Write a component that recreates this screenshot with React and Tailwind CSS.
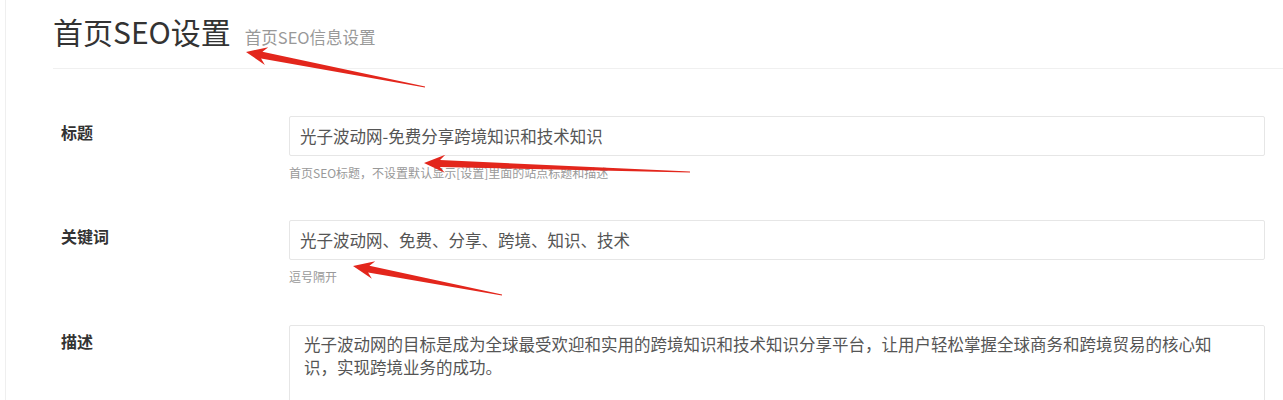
import React from "react";

const FONT = { fontFamily: '"Noto Sans CJK SC", "Noto Sans", sans-serif' };

// 截图里的红色标注箭头
function arrowPoints(tip, tail) {
  const dx = tip[0] - tail[0];
  const dy = tip[1] - tail[1];
  const len = Math.hypot(dx, dy);
  const ux = dx / len;
  const uy = dy / len;
  const nx = -uy;
  const ny = ux;
  const L = 16;
  const W = 9;
  const w1 = 3.4;
  const w0 = 0.5;
  const bx = tip[0] - ux * L;
  const by = tip[1] - uy * L;
  const barb = 5;
  const pts = [
    [tail[0] + nx * w0, tail[1] + ny * w0],
    [bx + nx * w1, by + ny * w1],
    [bx - ux * barb + nx * W, by - uy * barb + ny * W],
    [tip[0], tip[1]],
    [bx - ux * barb - nx * W, by - uy * barb - ny * W],
    [bx - nx * w1, by - ny * w1],
    [tail[0] - nx * w0, tail[1] - ny * w0],
  ];
  return pts.map((p) => p.map((v) => v.toFixed(1)).join(",")).join(" ");
}

const arrows = [
  { tip: [246, 52], tail: [425, 87] },
  { tip: [424, 163], tail: [690, 172] },
  { tip: [353, 266], tail: [502, 295] },
];

function Row({ label, children, help }) {
  return (
    <div className="flex">
      <div className="w-[236px] shrink-0 pl-2 pt-[4px]">
        <span className="block text-[16px] leading-[24px] font-bold text-[#333]">{label}</span>
      </div>
      <div className="flex-1">
        {children}
        {help && <p className="mt-2 text-[12px] leading-[18px] text-[#999]">{help}</p>}
      </div>
    </div>
  );
}

export default function App() {
  return (
    <div className="relative h-[400px] bg-white overflow-hidden" style={FONT}>
      <div className="ml-[5px] border-l border-[#efefef] h-full pl-[47px]">
        {/* 标题 */}
        <div className="flex items-baseline gap-[14px] pt-[13px] pb-[18px] border-b border-[#f0f0f0]">
          <h1 className="text-[30px] leading-[36px] text-[#333] font-normal">首页SEO设置</h1>
          <span className="text-[16.5px] text-[#999]">首页SEO信息设置</span>
        </div>

        <div className="pt-[47px] pr-[18px]">
          <Row label="标题" help="首页SEO标题，不设置默认显示[设置]里面的站点标题和描述">
            <input
              type="text"
              defaultValue="光子波动网-免费分享跨境知识和技术知识"
              className="w-full h-[40px] px-[10px] border border-[#e6e6e6] rounded-[2px] text-[16.5px] text-[#555] outline-none"
              style={FONT}
            />
          </Row>

          <div className="h-[38px]" />

          <Row label="关键词" help="逗号隔开">
            <input
              type="text"
              defaultValue="光子波动网、免费、分享、跨境、知识、技术"
              className="w-full h-[40px] px-[10px] border border-[#e6e6e6] rounded-[2px] text-[16.5px] text-[#555] outline-none"
              style={FONT}
            />
          </Row>

          <div className="h-[39px]" />

          <Row label="描述">
            <textarea
              defaultValue="光子波动网的目标是成为全球最受欢迎和实用的跨境知识和技术知识分享平台，让用户轻松掌握全球商务和跨境贸易的核心知识，实现跨境业务的成功。"
              className="block w-full h-[120px] pl-[14px] pr-[40px] py-[7px] border border-[#e6e6e6] rounded-[2px] text-[16.5px] leading-[23px] text-[#555] outline-none resize-none"
              style={FONT}
            />
          </Row>
        </div>
      </div>

      {/* 标注箭头 */}
      <svg className="absolute left-0 top-0 pointer-events-none" width="1283" height="400">
        {arrows.map((a, i) => (
          <polygon key={i} points={arrowPoints(a.tip, a.tail)} fill="#e3261c" />
        ))}
      </svg>
    </div>
  );
}
